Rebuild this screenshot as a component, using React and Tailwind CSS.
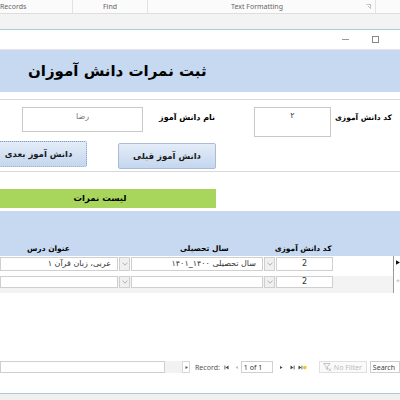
import React from "react";

const fa = "font-['DejaVu_Sans',sans-serif]";

function Chevron() {
  return (
    <div className="flex h-full w-[11px] shrink-0 items-center justify-center border border-[#cfcfcf] bg-[#f0f0f0]">
      <svg width="6" height="4" viewBox="0 0 6 4">
        <path d="M0.5 0.6 L3 3.2 L5.5 0.6" fill="none" stroke="#a0a0a0" strokeWidth="0.8" />
      </svg>
    </div>
  );
}

function Cell({ className, children }) {
  return (
    <div
      dir="rtl"
      className={`flex h-full items-center border border-[#cfcfcf] bg-white px-[6px] text-[8px] text-[#333] ${fa} ${className}`}
    >
      {children}
    </div>
  );
}

function NavIcon({ d, fill = "#444" }) {
  return (
    <svg width="7" height="7" viewBox="0 0 7 7" className="shrink-0">
      <path d={d} fill={fill} />
    </svg>
  );
}

export default function App() {
  return (
    <div className="flex h-[400px] w-[400px] flex-col overflow-hidden bg-white font-['Noto_Sans',sans-serif]">
      {/* ribbon group labels */}
      <div className="flex h-[13px] shrink-0 items-center bg-[#fbfbfb] text-[7px] leading-none text-[#666]">
        <div className="flex h-full w-[73px] items-center border-r border-[#e2e2e2]">Records</div>
        <div className="flex h-full w-[75px] items-center justify-center border-r border-[#e2e2e2]">Find</div>
        <div className="flex h-full w-[228px] items-center border-r border-[#e2e2e2]">
          <span className="flex-1 text-center">Text Formatting</span>
          <svg width="5" height="5" viewBox="0 0 5 5" className="mr-[4px]">
            <path d="M0.5 0.5 H4.5 V4.5" fill="none" stroke="#aaa" strokeWidth="0.7" />
            <path d="M2 2 L4.5 4.5" stroke="#aaa" strokeWidth="0.7" />
          </svg>
        </div>
      </div>
      <div className="h-[17px] shrink-0 border-t border-b border-t-[#dedede] border-b-[#a9cbdb] bg-[#f3f3f3]" />

      {/* window title bar */}
      <div className="flex h-[20px] shrink-0 items-center justify-end border-b border-[#e6e6e6] bg-white pr-[21px]">
        <div className="mr-[23px] h-px w-[7px] bg-[#999]" />
        <div className="h-[7px] w-[7px] border border-[#888]" />
      </div>

      {/* form header */}
      <div className="flex h-[42px] shrink-0 items-center bg-[#c6d9f0] pl-[28px]">
        <span dir="rtl" className={`text-[15px] font-bold text-black ${fa}`}>
          ثبت نمرات دانش آموزان
        </span>
      </div>

      {/* detail */}
      <div className="h-[8px] shrink-0 border-b border-[#d8d8d8]" />
      <div className="flex h-[72px] shrink-0 flex-col border-b border-[#d8d8d8]">
        <div className="mt-[7px] flex h-[30px] items-start">
          <div dir="rtl" className={`ml-[22px] flex h-[25px] w-[121px] items-start justify-center border border-[#c8c8c8] pt-[3px] text-[8px] text-[#777] ${fa}`}>
            رضا
          </div>
          <div dir="rtl" className={`ml-[12px] mt-[5px] w-[60px] text-[8px] font-bold text-black ${fa}`}>
            نام دانش آموز
          </div>
          <div dir="rtl" className={`ml-[39px] flex h-[30px] w-[77px] items-start justify-center border border-[#c8c8c8] pt-[2px] text-[8px] text-[#333] ${fa}`}>
            ۲
          </div>
          <div dir="rtl" className={`ml-[4px] mt-[5px] text-[7.5px] font-bold text-black ${fa}`}>
            کد دانش آموزی
          </div>
        </div>
        <div className="mt-[4px] flex items-start">
          <div className={`-ml-[10px] flex h-[26px] w-[97px] items-center justify-center rounded-[2px] border border-dotted border-[#7f9bbf] bg-gradient-to-b from-[#e4edf8] to-[#c4d6ee] text-[8.5px] font-bold text-[#1a1a1a] ${fa}`}>
            <span dir="rtl">دانش آموز بعدی</span>
          </div>
          <div className={`ml-[31px] mt-[2px] flex h-[26px] w-[98px] items-center justify-center rounded-[2px] border border-[#a8bcd6] bg-gradient-to-b from-[#e4edf8] to-[#c4d6ee] text-[8.5px] font-bold text-[#1a1a1a] ${fa}`}>
            <span dir="rtl">دانش آموز قبلی</span>
          </div>
        </div>
      </div>

      {/* list bar */}
      <div className={`-ml-[16px] mt-[17px] flex h-[19px] w-[232px] shrink-0 items-center justify-center bg-[#a8d65c] text-[8.5px] font-bold text-black ${fa}`}>
        <span dir="rtl">لیست نمرات</span>
      </div>

      {/* subform header */}
      <div className={`mt-[3px] flex h-[45px] shrink-0 items-end bg-[#c6d9f0] pb-[4px] text-[7.5px] font-bold leading-none text-black ${fa}`}>
        <span dir="rtl" className="ml-[27px]">عنوان درس</span>
        <span dir="rtl" className="ml-[110px]">سال تحصیلی</span>
        <span dir="rtl" className="ml-[46px]">کد دانش آموزی</span>
      </div>

      {/* rows */}
      <div className="flex h-[20px] shrink-0">
        <div className="flex flex-1 items-start pt-[1px]">
          <div className="flex h-[14px] items-stretch gap-[1px]">
            <Cell className="w-[118px] justify-start">عربی، زبان قرآن ۱</Cell>
            <Chevron />
            <Cell className="w-[132px] justify-start">سال تحصیلی ۱۴۰۰_۱۴۰۱</Cell>
            <Chevron />
            <Cell className="w-[57px] justify-center text-[7.5px]">2</Cell>
          </div>
        </div>
        <div className="flex w-[7px] items-start border-l border-[#9a9a9a] pl-[2px] pt-[3px]">
          <svg width="6" height="7" viewBox="0 0 6 7">
            <path d="M0 0 L6 3.5 L0 7 Z" fill="#111" />
          </svg>
        </div>
      </div>
      <div className="flex h-[17px] shrink-0">
        <div className="flex flex-1 items-start bg-[#f3f3f3]">
          <div className="flex h-[12px] items-stretch gap-[1px]">
            <Cell className="w-[118px] bg-[#f3f3f3]" />
            <Chevron />
            <Cell className="w-[132px] bg-[#f3f3f3]" />
            <Chevron />
            <Cell className="w-[57px] justify-center bg-[#f3f3f3] text-[7.5px]">2</Cell>
          </div>
        </div>
        <div className="flex w-[7px] items-start border-l border-[#9a9a9a] pl-[2px] pt-[2px] text-[7px] leading-none text-[#bbb]">
          *
        </div>
      </div>

      <div className="flex-1" />

      {/* navigation bar */}
      <div className="flex h-[12px] shrink-0 items-center text-[7px] leading-none text-[#444]">
        <div className="h-full w-[165px] border border-[#cfcfcf] bg-white" />
        <div className="h-full w-[17px] bg-[#f2f2f2]" />
        <div className="flex h-full w-[8px] items-center justify-center border border-[#d8d8d8] bg-white">
          <NavIcon d="M2.5 2 L5 3.5 L2.5 5 Z" fill="#555" />
        </div>
        <span className="ml-[5px] text-[#555]">Record:</span>
        <span className="ml-[3px] flex items-center">
          <NavIcon d="M1.5 1.5 H2.3 V5.5 H1.5 Z M5.5 1.5 L2.6 3.5 L5.5 5.5 Z" />
        </span>
        <span className="ml-[3px] flex items-center">
          <NavIcon d="M5 2 L2.5 3.5 L5 5 Z" fill="#bbb" />
        </span>
        <div className="ml-[1px] flex h-full w-[32px] items-center border border-[#d0d0d0] bg-white pl-[2px] text-[#333]">
          1 of 1
        </div>
        <span className="ml-[5px] flex items-center">
          <NavIcon d="M2 2 L4.5 3.5 L2 5 Z" />
        </span>
        <span className="ml-[4px] flex items-center">
          <NavIcon d="M1.5 1.5 L4.4 3.5 L1.5 5.5 Z M4.7 1.5 H5.5 V5.5 H4.7 Z" />
        </span>
        <span className="ml-[2px] flex items-center">
          <svg width="9" height="7" viewBox="0 0 9 7">
            <path d="M0.5 1.5 L3.4 3.5 L0.5 5.5 Z M3.6 1.5 H4.3 V5.5 H3.6 Z" fill="#444" />
            <circle cx="6.8" cy="3.6" r="1.8" fill="#f2c230" />
          </svg>
        </span>
        <div className="ml-[12px] flex h-full w-[48px] items-center border border-[#e0e0e0] bg-[#fafafa] pl-[3px] text-[#bbb]">
          <svg width="9" height="9" viewBox="0 0 9 9" className="mr-[2px] shrink-0">
            <path d="M0.5 0.5 H7 L4.6 3.4 V6.5 L3 5.6 V3.4 Z" fill="none" stroke="#b5b5b5" strokeWidth="0.8" />
            <path d="M5.4 5.4 L8.2 8.2 M8.2 5.4 L5.4 8.2" stroke="#b5b5b5" strokeWidth="0.8" />
          </svg>
          No Filter
        </div>
        <div className="ml-[3px] flex h-full flex-1 items-center border border-[#cfcfcf] bg-white pl-[2px] text-[#444]">
          Search
        </div>
      </div>
      <div className="h-[20px] shrink-0" />
      <div className="h-[7px] shrink-0 border-t border-[#a9cbdb] bg-[#f0f0f0]" />
    </div>
  );
}
